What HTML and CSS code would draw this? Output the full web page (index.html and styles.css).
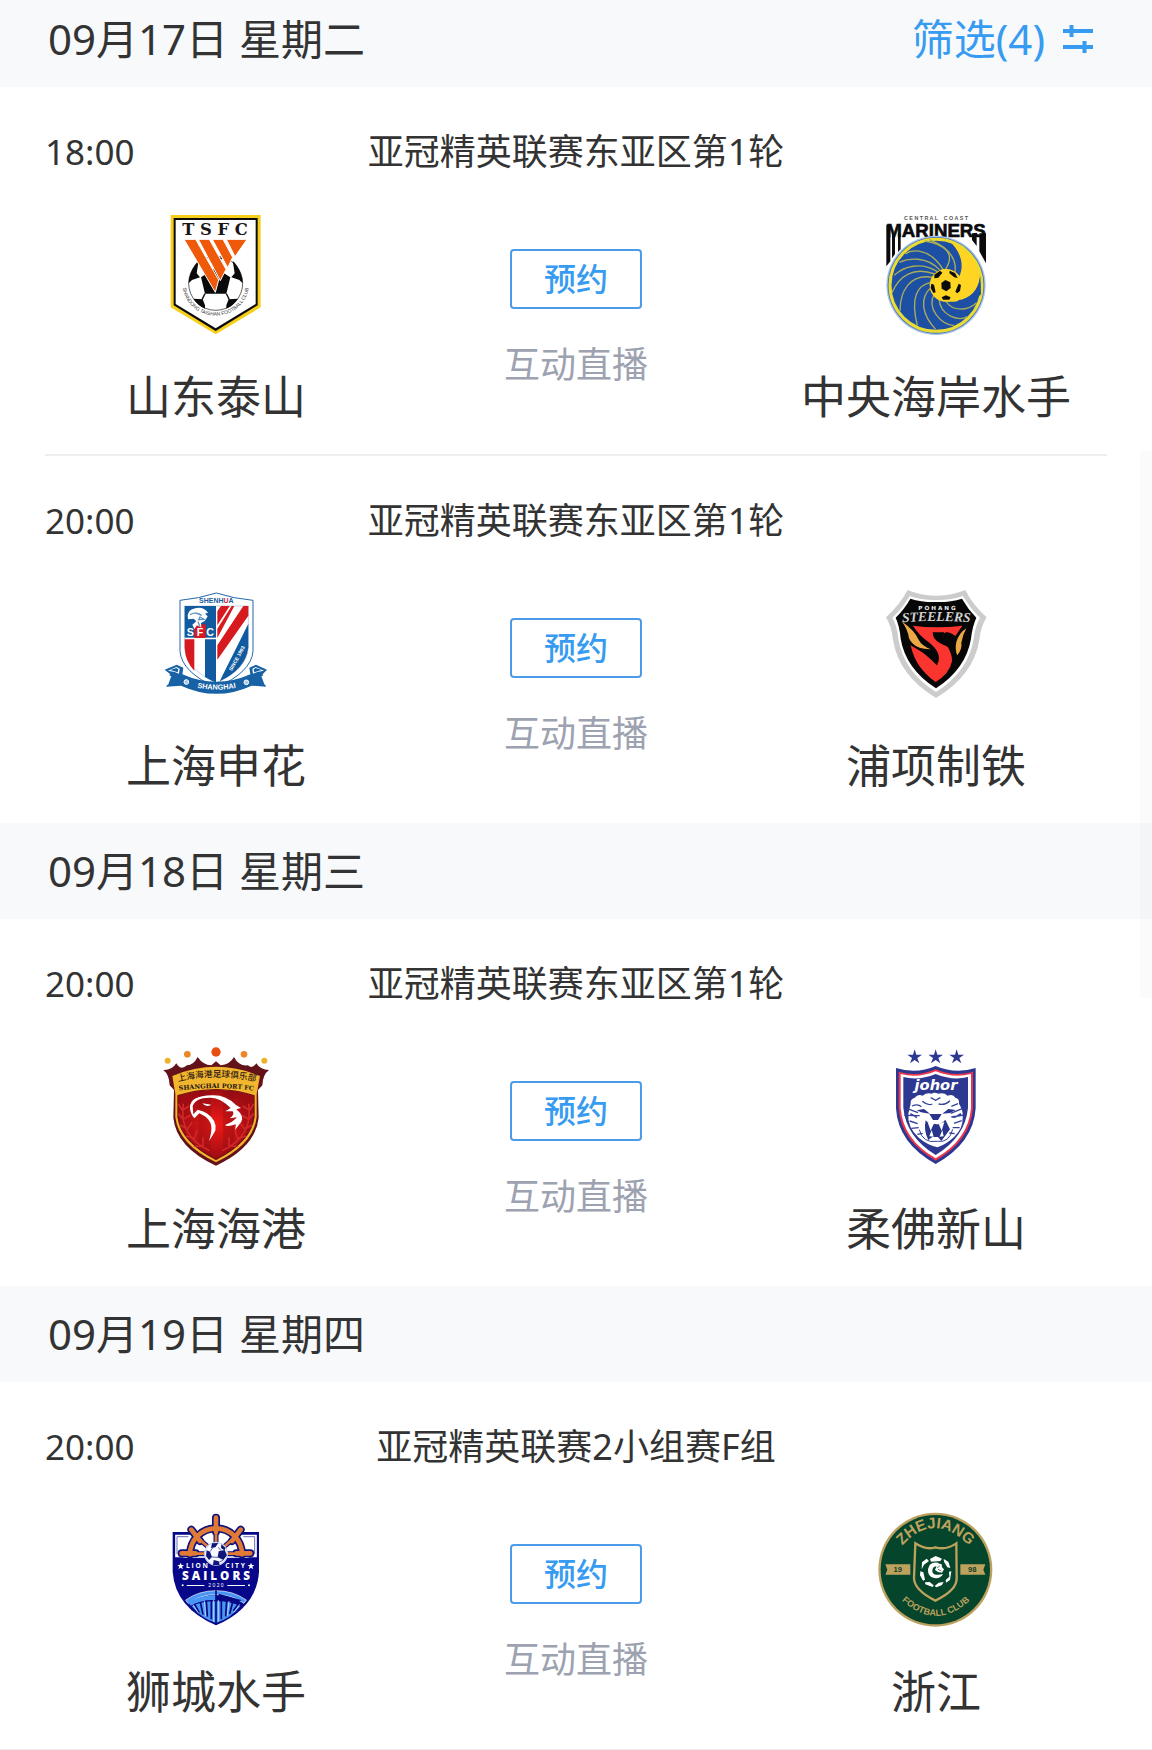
FILE: index.html
```html
<!DOCTYPE html>
<html lang="zh-CN">
<head>
<meta charset="utf-8">
<meta name="viewport" content="width=device-width, initial-scale=1">
<title>赛程</title>
<link rel="stylesheet" href="styles.css">
</head>
<body>
<main class="schedule">

  <section class="day">
    <header class="day-header day-header-first">
      <h2 class="day-title">09月17日 星期二</h2>
      <button class="filter" type="button">
        <span>筛选(4)</span>
        <svg class="filter-icon" viewBox="0 0 30 28" aria-hidden="true">
          <path d="M0 6h30M8.500 0v12M0 22h30M21.500 16v12" fill="none" stroke="currentColor" stroke-width="4"/>
        </svg>
      </button>
    </header>

    <article class="match">
      <div class="match-info">
        <time class="match-time">18:00</time>
        <h3 class="match-league">亚冠精英联赛东亚区第1轮</h3>
      </div>
      <div class="match-body">
        <div class="team">
          <svg class="crest" viewBox="17 45 360 360" role="img" aria-label="山东泰山">
            <path d="M61 45H331V322L196 403 61 322Z" fill="#f5cf1b"/>
            <path d="M70 54H322V316L196 393 70 316Z" fill="#0c0a0b"/>
            <path d="M76 60H316V312L196 385 76 312Z" fill="#fff"/>
            <text x="194" y="104" text-anchor="middle" font-family="DejaVu Serif, serif" font-weight="700" font-size="49" fill="#1b1516">T S F C</text>
            <circle cx="196" cy="250" r="81" fill="#fff" stroke="#111" stroke-width="2"/>
            <path d="M172 172q24-8 44 3l-10 12h-26zM121 220q8-24 24-38l-6 38 10 12-24 8-10 10q0-16 6-30zM271 220q-8-24-24-38l6 38-10 12 24 8 10 10q0-16-6-30zM152 232l44-28 44 28-12 49h-64zM129 296l28 2 7 18v10q-22-10-35-30zM263 296l-28 2-7 18v10q22-10 35-30z" fill="#0a0a0a"/>
            <path d="M164 281l-9 18M228 281l9 18M196 204v-25" stroke="#111" stroke-width="4"/>
            <g fill="#ee5a0a" stroke="#fff" stroke-width="3">
              <path d="M101 118h35l69 122-10 37z"/>
              <path d="M144 118h33l50 90-17 34z"/>
              <path d="M186 118h32l29 54-15 31z"/>
              <path d="M228 118h62l-36 52z"/>
            </g>
            <path id="tsArc" d="M96 250A100 97 0 0 0 296 250" fill="none"/>
            <text font-family="Liberation Sans, sans-serif" font-size="15" fill="#333"><textPath href="#tsArc" startOffset="50%" text-anchor="middle">SHANDONG TAISHAN FOOTBALL CLUB</textPath></text>
          </svg>
          <p class="team-name">山东泰山</p>
        </div>
        <div class="match-center">
          <button class="reserve" type="button">预约</button>
          <p class="live">互动直播</p>
        </div>
        <div class="team">
          <svg class="crest" viewBox="18 45 360 360" role="img" aria-label="中央海岸水手">
            <text x="198" y="60" text-anchor="middle" font-family="Liberation Sans, sans-serif" font-weight="700" font-size="16" fill="#555">C E N T R A L &#160; &#160;C O A S T</text>
            <path d="M49 74h12v110l-12 15zM66 100h9v62l-9 13zM84 100h8v48l-8 8zM348 100v90l-20-36v-54zM320 100v38l-14-18v-20z" fill="#0b0b0d"/>
            <text x="198" y="112" text-anchor="middle" font-family="Liberation Sans, sans-serif" font-weight="700" font-size="56" fill="#0b0b0d" stroke="#0b0b0d" stroke-width="2">MARINERS</text>
            <circle cx="198" cy="256" r="149" fill="#a9c2ee"/>
            <circle cx="198" cy="256" r="145" fill="#3d6eb7"/>
            <circle cx="198" cy="256" r="138" fill="#1d50a5" stroke="#eadc32" stroke-width="9"/>
            <path d="M236 123C286 143 339 190 328 242 317 295 270 311 218 303L195 286 216 205 268 229C285 193 269 147 236 123Z" fill="#ffd423"/>
            <path d="M331 228C326 268 302 297 262 301 290 312 316 303 333 282Z" fill="#1d50a5"/>
            <g fill="none" stroke="#a9ad5a" stroke-width="4">
              <path d="M225 210C260 160 222 132 164 123"/>
              <path d="M254 222C264 171 230 140 178 119"/>
              <path d="M220 210C184 148 130 145 106 162"/>
              <path d="M211 212C170 165 112 176 88 187"/>
              <path d="M202 215C154 185 102 198 73 226"/>
              <path d="M194 222C130 199 88 227 66 278"/>
              <path d="M188 232C120 220 90 273 90 333"/>
              <path d="M184 247C143 254 120 290 142 376"/>
              <path d="M184 262C146 295 157 345 197 388"/>
              <path d="M193 282C168 326 214 373 252 377"/>
              <path d="M207 297C211 348 267 365 292 350"/>
              <path d="M227 303C249 337 294 332 320 308"/>
            </g>
            <circle cx="228" cy="256" r="49" fill="#ffd423"/>
            <path d="M226 240l15 7 1 17-13 10-14-8-1-17zM193 224l17-12 7 6-12 15-12 2zM239 212l16 7 8 15-10-2-15-12zM184 251l8 3 5 23-7 2-8-15zM266 251l7 4-3 18-8 7-6-5zM215 292l13-6 14 6-4 7h-19z" fill="#0c0c0b"/>
          </svg>
          <p class="team-name">中央海岸水手</p>
        </div>
      </div>
    </article>

    <article class="match">
      <div class="match-info">
        <time class="match-time">20:00</time>
        <h3 class="match-league">亚冠精英联赛东亚区第1轮</h3>
      </div>
      <div class="match-body">
        <div class="team">
          <svg class="crest" viewBox="17 12 360 360" role="img" aria-label="上海申花">
            <path d="M89 61Q145 56 198 39 250 56 308 61V214Q303 276 198 323 94 276 89 214Z" fill="#fff" stroke="#2467a8" stroke-width="3"/>
            <text x="198" y="68" text-anchor="middle" font-family="Liberation Sans, sans-serif" font-weight="700" font-size="21" fill="#165b9f">SHENH<tspan fill="#d51b2b">U</tspan>A</text>
            <path d="M103 78H294V202Q291 266 198 309 106 266 103 202Z" fill="#fff" stroke="#aabfd5" stroke-width="2"/>
            <path d="M103 78H197V173H103Z" fill="#115aa0"/>
            <path d="M103 178h29v94q-27-27-29-68z" fill="#d71920"/>
            <path d="M164 178h33v130q-16-7-33-17z" fill="#115aa0"/>
            <path d="M201 136V94l11-16h26l-37 58zM201 239v-43l78-118h15v29zM201 174v-28l43-68h8z" fill="#d71920"/>
            <path d="M208 304l86-173v71q-7 65-86 102z" fill="#115aa0"/>
            <path d="M132 133h34v41h-34z" fill="#d71920"/>
            <text x="150" y="167" text-anchor="middle" font-family="Liberation Sans, sans-serif" font-weight="700" font-size="32" fill="#fff">S F C</text>
            <path d="M112 105q4-16 18-19 28-9 43 12l-9 3 8 8-8 13-12 7 1 14-13-7-8 11-6-13 12-10-8-8-17 2z" fill="#fff"/>
            <path d="M119 104q18-10 35 2l-18-7M149 111l12 7-16 1zM143 125l6 15" fill="none" stroke="#5d91c3" stroke-width="4"/>
            <text transform="translate(244 274) rotate(-61)" font-family="Liberation Sans, sans-serif" font-weight="700" font-size="15" fill="#fff">SINCE 1993</text>
            <path d="M43 269l36-15 20 9-3 20Q198 328 300 283l-3-20 20-9 33 15-13 14 10 37-43-3Q198 366 92 317l-44 3 11-38z" fill="#1761a5"/>
            <path d="M53 272l25-11 10 5-2 15-13-5zM341 272l-25-11-10 5 2 15 13-5zM49 286l14 2-9 25-6 4zM347 286l-14 2 9 25 6 4z" fill="#fff"/>
            <path d="M60 270l18-6 6 4-2 9zM334 270l-18-6-6 4 2 9z" fill="#1761a5"/>
            <circle cx="108" cy="306" r="7" fill="#a9c9e6" stroke="#fff" stroke-width="3"/>
            <circle cx="288" cy="307" r="7" fill="#a9c9e6" stroke="#fff" stroke-width="3"/>
            <path id="shArc" d="M126 320Q198 338 272 320" fill="none"/>
            <text font-family="Liberation Sans, sans-serif" font-weight="700" font-size="22" fill="#fff"><textPath href="#shArc" startOffset="50%" text-anchor="middle">SHANGHAI</textPath></text>
          </svg>
          <p class="team-name">上海申花</p>
        </div>
        <div class="match-center">
          <button class="reserve" type="button">预约</button>
          <p class="live">互动直播</p>
        </div>
        <div class="team">
          <svg class="crest" viewBox="18 12 360 360" role="img" aria-label="浦项制铁">
            <path d="M113 30Q155 48 198 47 242 48 286 30 306 72 350 112 332 140 328 180 311 286 198 354 86 286 69 180 65 140 48 112 91 72 113 30Z" fill="#ccc"/>
            <path d="M119 48Q155 61 198 60 242 61 279 48 301 86 330 113 315 139 311 176 296 273 198 336 100 273 85 176 82 139 67 113 97 86 119 48Z" fill="#fff"/>
            <path d="M121 56Q155 67 198 66 242 67 276 56 294 88 319 113 307 139 303 176 288 266 198 325 107 266 92 176 89 139 77 113 103 88 121 56Z" fill="#060606"/>
            <text x="201" y="90" text-anchor="middle" font-family="DejaVu Sans, sans-serif" font-weight="700" font-size="17" fill="#eee">P O H A N G</text>
            <path id="poArc" d="M94 127Q198 119 304 127" fill="none"/>
            <text font-family="Liberation Serif, serif" font-weight="700" font-style="italic" font-size="41" fill="#d0d0d0"><textPath href="#poArc" startOffset="50%" text-anchor="middle">STEELERS</textPath></text>
            <path d="M129 137Q198 147 277 137L256 168Q232 150 221 161C214 184 250 211 246 244Q239 281 197 306C161 281 132 246 122 196L190 237 204 250C212 227 203 209 178 188Q145 164 129 137Z" fill="#fa352f"/>
            <path d="M188 157H222L221 171 239 203C209 191 188 181 188 157ZM132 194L180 212Q206 223 202 257L187 242Z" fill="#060606"/>
            <path d="M95 124Q135 153 145 178 156 199 183 208 133 209 117 175 113 147 95 124ZM289 145Q268 158 259 186 254 211 262 226 277 207 274 188 277 167 289 145Z" fill="#eca844"/>
          </svg>
          <p class="team-name">浦项制铁</p>
        </div>
      </div>
    </article>
  </section>

  <section class="day">
    <header class="day-header">
      <h2 class="day-title">09月18日 星期三</h2>
    </header>
    <article class="match">
      <div class="match-info">
        <time class="match-time">20:00</time>
        <h3 class="match-league">亚冠精英联赛东亚区第1轮</h3>
      </div>
      <div class="match-body">
        <div class="team">
          <svg class="crest" viewBox="17 36 360 360" role="img" aria-label="上海海港">
            <defs>
              <radialGradient id="portRed"><stop offset="0" stop-color="#f01a16"/><stop offset="1" stop-color="#9d0c13"/></radialGradient>
            </defs>
            <path d="M39 105Q65 106 78 85 91 108 110 91 129 91 142 66 158 90 183 91L197 79 211 91Q238 89 251 66 266 95 293 91 306 103 318 85 330 105 356 105 337 119 336 151L323 165 325 248Q316 337 197 392 78 337 69 248L71 165 58 151Q57 119 39 105Z" fill="#64121a"/>
            <path d="M66 123Q198 68 329 123L319 177V247Q309 329 197 382 85 329 75 247V177Z" fill="#f1b62d"/>
            <path d="M83 182Q198 146 311 182V246Q301 321 197 373 93 321 83 246Z" fill="url(#portRed)" stroke="#780e13" stroke-width="4"/>
            <path d="M145 168h37v197l-37-24zM218 168h33v174l-33 22z" fill="#790d13" opacity=".25"/>
            <g fill="none" stroke="#cf2927" stroke-width="5">
              <path d="M99 206Q84 303 178 347M295 206Q310 303 216 347"/>
              <path d="M96 226l-12-19M96 226l21-13M99 253l-15-17M99 253l21-12M111 282l-22-12M111 282l15-20M133 310l-26-7M133 310l7-25M158 333l-26 1M158 333v-26M298 226l12-19M298 226l-21-13M295 253l15-17M295 253l-21-12M283 282l22-12M283 282l-15-20M261 310l26-7M261 310l-7-25M236 333l26 1M236 333v-26"/>
            </g>
            <path d="M119 218Q118 182 185 181 226 179 257 210L272 219 258 223Q282 243 273 260L254 285 257 268Q230 277 224 270 249 261 260 247L238 250Q254 239 247 229L225 229 241 219Q209 188 182 188 134 187 127 214L129 238 142 224Q158 228 169 235 201 256 195 287L176 319C184 288 191 267 166 245L147 235 132 250Q119 234 119 218Z" fill="#fff"/>
            <path d="M156 205l27 4q-15 10-27-4z" fill="#fff"/>
            <path id="portCn" d="M76 142Q198 110 324 142" fill="none"/>
            <text font-family="Noto Sans CJK SC, sans-serif" font-weight="500" font-size="26" fill="#342018"><textPath href="#portCn" startOffset="50%" text-anchor="middle">上海海港足球俱乐部</textPath></text>
            <path id="portEn" d="M79 168Q198 150 317 168" fill="none"/>
            <text font-family="DejaVu Serif, serif" font-weight="700" font-size="19" fill="#1c1513"><textPath href="#portEn" startOffset="50%" text-anchor="middle">SHANGHAI PORT FC</textPath></text>
            <g fill="#efb32a"><circle cx="52" cy="77" r="9"/><circle cx="342" cy="77" r="9"/></g>
            <g fill="#eb8724"><circle cx="111" cy="58" r="10"/><circle cx="281" cy="58" r="10"/></g>
            <circle cx="197" cy="51" r="14" fill="#e94e11"/>
          </svg>
          <p class="team-name">上海海港</p>
        </div>
        <div class="match-center">
          <button class="reserve" type="button">预约</button>
          <p class="live">互动直播</p>
        </div>
        <div class="team">
          <svg class="crest" viewBox="18 36 360 360" role="img" aria-label="柔佛新山">
            <g fill="#2d3990">
              <path id="jStar" d="M134 43l5 16h17l-14 10 6 16-14-10-14 10 6-16-14-10h17z"/>
              <use href="#jStar" x="63"/>
              <use href="#jStar" x="126"/>
            </g>
            <path d="M78 99Q141 118 197 93 256 118 317 99V220Q310 325 197 387 84 325 78 220Z" fill="#2c388f"/>
            <path d="M86 110Q142 127 197 103 253 127 309 110V220Q301 318 197 377 93 318 86 220Z" fill="#ed354d"/>
            <path d="M92 117Q143 131 197 109 252 131 303 117V219Q295 314 197 370 99 314 92 219Z" fill="#fff"/>
            <path d="M100 126Q146 138 197 117 249 138 294 126V218Q286 305 197 360 108 305 100 218Z" fill="#2d3990"/>
            <text x="198" y="166" text-anchor="middle" font-family="DejaVu Sans, sans-serif" font-style="italic" font-weight="700" font-size="44" fill="#fff">johor</text>
            <path d="M122 206Q120 192 134 188 143 176 158 182 170 172 185 176 193 171 205 176 222 172 233 182 250 176 256 188 269 190 267 206 281 228 278 249 279 280 253 305 231 326 203 337 173 331 147 309 111 276 115 236Z" fill="#fff"/>
            <path d="M167 256Q182 272 195 266 210 272 226 254L240 283Q228 300 214 318L204 306H187L175 315Q160 287 167 256Z" fill="#29348b"/>
            <path d="M173 262l9 25 9-20zM206 267l9 20 8-26zM178 304l7-19 6 20zM209 305l8-20 4 19z" fill="#fff"/>
            <path d="M178 237h37l-11 18h-15zM140 226l22-4 18 14-27-4zM217 236l18-14 22 3-17 9z" fill="#29348b"/>
            <path d="M157 199q16 14 30 8M206 207q18 5 34-10M182 188l15 8 14-8M126 213q17-8 28 2M244 214l20-8M121 236l20 12M119 258l24 8M124 280l22-2M273 236l-20 12M275 257l-23 8M269 278l-21 0M142 298l16-3M254 296l-16-2M103 241l46 1M284 218l-42 17M112 221l32 12M244 246l38-6" fill="none" stroke="#34409a" stroke-width="4"/>
            <path d="M148 284q10 42 54 35 36 5 46-36" fill="none" stroke="#34409a" stroke-width="3"/>
          </svg>
          <p class="team-name">柔佛新山</p>
        </div>
      </div>
    </article>
  </section>

  <section class="day">
    <header class="day-header">
      <h2 class="day-title">09月19日 星期四</h2>
    </header>
    <article class="match">
      <div class="match-info">
        <time class="match-time">20:00</time>
        <h3 class="match-league">亚冠精英联赛2小组赛F组</h3>
      </div>
      <div class="match-body">
        <div class="team">
          <svg class="crest" viewBox="17 30 360 360" role="img" aria-label="狮城水手">
            <path d="M67 96H326V216Q319 323 197 376 75 323 67 216Z" fill="#060789"/>
            <path d="M72 102H322V174H72Z" fill="#fff" stroke="#060789" stroke-width="5"/>
            <path d="M80 162V110h34M313 162V110h-34" fill="none" stroke="#6d70b6" stroke-width="3"/>
            <path d="M99 173A98 98 0 0 1 295 173Z" fill="#fff"/>
            <g fill="none" stroke-linecap="round">
              <g stroke="#11127d" stroke-width="24"><path d="M197 53V95M123 89l26 34M271 89l-26 34M94 160h42M300 160h-42"/><path d="M119 163a78 78 0 0 1 156 0"/></g>
              <g stroke="#10117e" stroke-width="15"><path d="M197 161V96M197 161l-50-43M197 161l50-43M197 161h-61M197 161h61"/></g>
              <g stroke="#e07a35" stroke-width="14"><path d="M197 53V96M123 89l26 34M271 89l-26 34M94 160h42M300 160h-42"/><path d="M119 163a78 78 0 0 1 156 0"/></g>
              <g stroke="#e07a35" stroke-width="8"><path d="M197 161V96M197 161l-50-43M197 161l50-43M197 161h-61M197 161h61"/></g>
            </g>
            <path d="M70 174H323V186H70Z" fill="#060789"/>
            <circle cx="197" cy="161" r="34" fill="#f8faff" stroke="#cbd4ec" stroke-width="4"/>
            <path d="M185 130l19-1-9 13-13 2zM169 151l10 4 6 16-9 9-9-12zM205 154l18-4 7 16-11 14-17-8zM190 180l15 4 3 11h-20zM213 133l13 11-4 7-10-7z" fill="#11167c"/>
            <path d="M179 155l9-13M204 142l8 10M185 171l18 1M219 180l-13 7" stroke="#11167c" stroke-width="2"/>
            <g fill="#fff">
              <path id="lStar" d="M91 188l3 7h7l-6 5 3 8-7-5-7 5 3-8-6-5h7z"/>
              <use href="#lStar" x="211"/>
              <text x="140" y="204" text-anchor="middle" font-family="Open Sans, sans-serif" font-weight="700" font-size="20">L I O N</text>
              <text x="254" y="204" text-anchor="middle" font-family="Open Sans, sans-serif" font-weight="700" font-size="20">C I T Y</text>
              <text x="197" y="239" text-anchor="middle" font-family="Open Sans, sans-serif" font-weight="800" font-size="35">S A I L O R S</text>
              <text x="197" y="261" text-anchor="middle" font-family="Liberation Sans, sans-serif" font-size="15">2 0 2 0</text>
              <path d="M109 255h53v3h-53zM231 255h53v3h-53z"/><circle cx="97" cy="256" r="3"/><circle cx="296" cy="256" r="3"/>
            </g>
            <path d="M106 300Q146 272 197 272 248 272 288 300L281 310Q244 284 197 284 150 284 113 310Z" fill="#4895f4" stroke="#fff" stroke-width="2"/>
            <path d="M113 306Q155 285 197 286V300Q155 298 121 317Z" fill="#4895f4"/>
            <path d="M124 319Q155 303 197 304 239 303 270 319 239 357 197 369 155 357 124 319Z" fill="#4895f4"/>
            <path d="M132 312l15 26M150 306l8 38M168 302l3 48M183 300v58M213 300v58M229 302l-3 47M247 306l-9 36M264 312l-15 20" stroke="#080982" stroke-width="5"/>
            <path d="M128 314l17 26M162 303l4 46M190 300v65M204 300v65M236 303l-5 44M268 313l-17 24" stroke="#e9f3ff" stroke-width="2"/>
            <path d="M197 271v102" stroke="#080982" stroke-width="5"/>
            <path d="M205 281l70 20-23 6-47-12z" fill="#080982"/>
          </svg>
          <p class="team-name">狮城水手</p>
        </div>
        <div class="match-center">
          <button class="reserve" type="button">预约</button>
          <p class="live">互动直播</p>
        </div>
        <div class="team">
          <svg class="crest" viewBox="18 30 360 360" role="img" aria-label="浙江">
            <circle cx="196" cy="209" r="171" fill="#bca15e"/>
            <circle cx="196" cy="209" r="164" fill="#05452c"/>
            <path d="M46 193h75v31H46l6-15zM346 193h-75v31h75l-6-15z" fill="#bda25e"/>
            <text x="83" y="217" text-anchor="middle" font-family="Liberation Sans, sans-serif" font-weight="700" font-size="23" fill="#173e28">19</text>
            <text x="307" y="217" text-anchor="middle" font-family="Liberation Sans, sans-serif" font-weight="700" font-size="23" fill="#173e28">98</text>
            <path d="M136 130Q167 151 196 142 229 151 259 130L260 235Q261 271 196 302 133 271 132 235Z" fill="#05452c" stroke="#bda25e" stroke-width="7"/>
            <g fill="#fff">
              <path d="M180 177l17-9 19 8-5 7-28 2zM155 208l1-21 14-11 7 7-15 11zM221 177l14 8 6 19-9-2-10-17zM151 214l9 3 5 22-6 3-9-16zM237 215l7-1-4 26-12 8-1-8 11-10zM165 247l14-1 12 10-3 5-22-8zM194 258l12-10 15-2-6 10-16 6z"/>
              <path d="M205 188Q178 183 174 208 173 231 192 234 212 237 219 222L206 224Q186 227 187 211 189 196 205 199Z"/>
              <path d="M203 190l12 3 1 9 6 6-6 10-12-2-9-6 4-10z"/>
            </g>
            <path d="M201 204l9-7M204 208l10 5" stroke="#05452c" stroke-width="2"/>
            <path id="zjTop" d="M88 147Q190 22 307 147" fill="none"/>
            <text font-family="Liberation Sans, sans-serif" font-weight="700" font-size="46" fill="#bda25e"><textPath href="#zjTop" startOffset="50%" text-anchor="middle">ZHEJIANG</textPath></text>
            <path id="zjBottom" d="M91 297Q198 398 304 297" fill="none"/>
            <text font-family="Liberation Sans, sans-serif" font-weight="700" font-size="27" fill="#bda25e"><textPath href="#zjBottom" startOffset="50%" text-anchor="middle">FOOTBALL CLUB</textPath></text>
          </svg>
          <p class="team-name">浙江</p>
        </div>
      </div>
    </article>
  </section>

  <div class="scroll-thumb" aria-hidden="true"></div>
</main>
</body>
</html>
```
FILE: styles.css
```css
* {
  box-sizing: border-box;
}

body,
h2,
h3,
p {
  margin: 0;
}

body {
  background: #fff;
  color: #333;
  font-family: "Noto Sans", "Noto Sans CJK SC", sans-serif;
}

h2,
h3 {
  font-weight: 400;
}

button {
  margin: 0;
  font-family: inherit;
  cursor: pointer;
}

.schedule {
  position: relative;
  border-bottom: 1px solid #eee;
}

.day-header {
  display: flex;
  align-items: center;
  justify-content: space-between;
  min-height: 96px;
  padding: 0 59px 0 48px;
  background: #f7f9fb;
}

.day-header-first {
  min-height: 87px;
  padding-bottom: 10px;
}

.day-title {
  font-size: 42px;
  line-height: 56px;
}

.filter {
  display: flex;
  align-items: center;
  gap: 18px;
  padding: 0;
  border: 0;
  background: none;
  color: #369bf1;
  font-size: 42px;
  line-height: 56px;
}

.filter-icon {
  width: 30px;
  height: 28px;
}

.match {
  padding: 41px 0 29px;
}

.match:not(:last-child) {
  padding-bottom: 0;
}

.match:not(:last-child)::after {
  content: "";
  display: block;
  height: 2px;
  margin: 29px 45px 0;
  background: #eee;
}

.match-info {
  display: grid;
  grid-template-columns: 1fr auto 1fr;
  padding: 0 45px;
  line-height: 48px;
}

.match-time {
  font-size: 35px;
}

.match-league {
  font-size: 36px;
}

.match-body {
  display: grid;
  grid-template-columns: repeat(3, 1fr);
  padding: 39px 36px 0;
}

.team,
.match-center {
  display: flex;
  flex-direction: column;
  align-items: center;
}

.crest {
  width: 120px;
  height: 120px;
}

.team-name {
  margin-top: 34px;
  font-size: 45px;
  line-height: 56px;
  white-space: nowrap;
}

.match-center {
  padding-top: 34px;
}

.reserve {
  width: 132px;
  height: 60px;
  padding: 0;
  border: 2px solid #4a9ce8;
  border-radius: 4px;
  background: #fff;
  color: #369bf1;
  font-size: 32px;
  font-weight: 500;
  line-height: 48px;
}

.live {
  margin-top: 32px;
  color: #9da2b0;
  font-size: 36px;
  line-height: 48px;
}

.scroll-thumb {
  position: absolute;
  top: 451px;
  right: 0;
  width: 12px;
  height: 547px;
  background: rgba(0, 0, 0, 0.016);
}
```
